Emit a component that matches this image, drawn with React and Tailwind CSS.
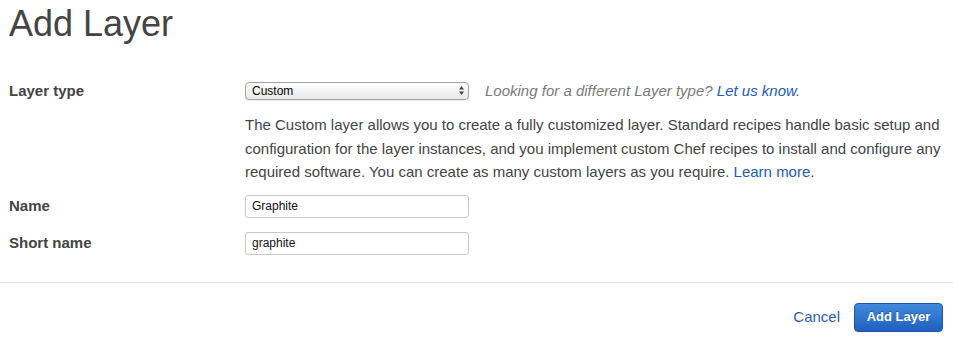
import React from 'react';

const App = () => {
  return (
    <div className="w-[953px] h-[342px] bg-white text-[#444] font-['Liberation_Sans',Arial,sans-serif] overflow-hidden">
      <h1 className="pl-[9px] pt-[6px] text-[36px] leading-[36px] font-normal text-[#444]">Add Layer</h1>

      <div className="mt-[40px] grid grid-cols-[236px_1fr] pl-[9px]">
        {/* Layer type */}
        <label className="text-[15px] leading-[18px] font-bold">Layer type</label>
        <div className="flex items-center gap-[16px]">
          <div className="relative w-[224px] h-[18px]">
            <select
              defaultValue="custom"
              className="block appearance-none w-full h-[18px] rounded-[4px] border border-[#a3a3a3] bg-gradient-to-b from-white to-[#e9e9e9] pl-[6px] text-[12px] leading-[16px] text-black shadow-[0_1px_1px_rgba(0,0,0,0.08)] outline-none"
            >
              <option value="custom">Custom</option>
            </select>
            <svg className="pointer-events-none absolute right-[5px] top-[4px]" width="5" height="9" viewBox="0 0 5 9">
              <path d="M2.5 0 L5 3.5 L0 3.5 Z" fill="#444" />
              <path d="M2.5 9 L5 5.5 L0 5.5 Z" fill="#444" />
            </svg>
          </div>
          <span className="text-[15px] leading-[18px] italic text-[#7a7a7a]">
            Looking for a different Layer type? <a href="#" className="text-[#1f5ab5]">Let us know.</a>
          </span>
        </div>

        {/* Description */}
        <div />
        <p className="mt-[13px] w-[702px] text-[15px] leading-[23.5px] text-[#444]">
          The Custom layer allows you to create a fully customized layer. Standard recipes handle basic setup and configuration for the layer instances, and you implement custom Chef recipes to install and configure any required software. You can create as many custom layers as you require. <a href="#" className="text-[#1f5ab5]">Learn more</a>.
        </p>

        {/* Name */}
        <label className="mt-[11px] flex items-center h-[23px] text-[15px] font-bold">Name</label>
        <div className="mt-[11px]">
          <input
            defaultValue="Graphite"
            className="block w-[224px] h-[23px] rounded-[3px] border border-[#c8c8c8] pl-[6px] text-[12px] text-[#111] outline-none"
          />
        </div>

        {/* Short name */}
        <label className="mt-[14px] flex items-center h-[23px] text-[15px] font-bold">Short name</label>
        <div className="mt-[14px]">
          <input
            defaultValue="graphite"
            className="block w-[224px] h-[23px] rounded-[3px] border border-[#c8c8c8] pl-[6px] text-[12px] text-[#111] outline-none"
          />
        </div>
      </div>

      <div className="mt-[27px] border-t border-[#dedede]" />

      <div className="mt-[20px] flex items-center justify-end gap-[14px] pr-[10px]">
        <a href="#" className="text-[15px] text-[#2a5db0]">Cancel</a>
        <button className="w-[89px] h-[29px] rounded-[4px] border border-[#1c55a8] bg-gradient-to-b from-[#4189dc] to-[#1f5fc0] text-[13px] font-bold text-white [text-shadow:0_-1px_0_rgba(0,0,0,0.25)]">
          Add Layer
        </button>
      </div>
    </div>
  );
};

export default App;
